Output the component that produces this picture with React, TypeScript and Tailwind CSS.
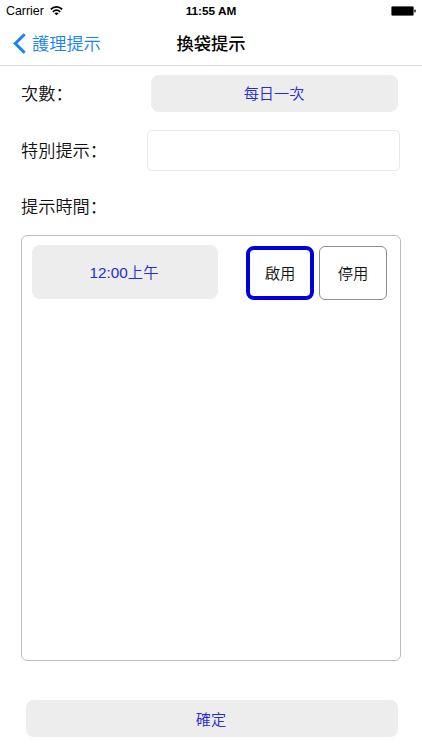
import { ReactNode } from 'react';

const FONT = "font-['Liberation_Sans','Noto_Sans_CJK_TC',sans-serif]";

function StatusBar() {
  return (
    <div className="grid h-[22px] grid-cols-3 items-center pl-[6px] pr-[6px] text-[12px] leading-[22px] text-black">
      <div className="flex items-center gap-[6px]">
        <span className="text-[12.4px]">Carrier</span>
        <svg width="13" height="10" viewBox="0 0 13 10" fill="none" stroke="#000">
          <path d="M0.8 3.4C4 0.1 9 0.1 12.2 3.4" strokeWidth="1.8" />
          <path d="M2.8 5.8C5 3.7 8 3.7 10.2 5.8" strokeWidth="1.7" />
          <path d="M6.5 9.3L4.3 7.2C5.6 6.1 7.4 6.1 8.7 7.2Z" fill="#000" stroke="none" />
        </svg>
      </div>
      <span className="text-center text-[11.8px] font-bold">11:55 AM</span>
      <div className="flex justify-end">
        <svg width="25" height="10" viewBox="0 0 25 10">
          <rect x="0.5" y="0.5" width="22" height="9" rx="1" fill="#000" stroke="#555" strokeWidth="0.6" />
          <rect x="23.2" y="3.6" width="1.6" height="2.8" rx="0.6" fill="#333" />
        </svg>
      </div>
    </div>
  );
}

function NavBar() {
  return (
    <header className="grid h-[44px] grid-cols-[1fr_auto_1fr] items-center border-b border-[#dcdcdc] text-[17.2px]">
      <button className="flex items-center gap-[6px] pl-[13px] text-[#1482fa]">
        <svg width="13" height="21" viewBox="0 0 13 21" fill="none" stroke="currentColor" strokeWidth="3">
          <path d="M11.7 1.2L2.3 10.5L11.7 19.8" />
        </svg>
        <span className="pt-[3px]">護理提示</span>
      </button>
      <h1 className="pt-[3px] font-medium text-black">換袋提示</h1>
      <span />
    </header>
  );
}

function Label({ children }: { children: ReactNode }) {
  return (
    <span className="flex text-[17.2px] leading-6 text-[#111]">
      {children}
      <span className="-mt-px font-['Noto_Sans_CJK_SC',sans-serif]" lang="zh-Hans">：</span>
    </span>
  );
}

export default function App() {
  return (
    <div className={`flex h-[750px] w-[422px] flex-col overflow-hidden bg-white font-[350] ${FONT}`} lang="zh-Hant">
      <StatusBar />
      <NavBar />

      <main className="flex flex-1 flex-col pl-[21px] pr-[21px]">
        <div className="mt-[9px] flex h-[37px] items-center justify-between pr-[3px]">
          <Label>次數</Label>
          <button className="h-[37px] w-[247px] rounded-lg bg-[#ededed] pr-px pt-[2px] text-[15.2px] text-[#2a2ad2]">每日一次</button>
        </div>

        <div className="mt-[18px] flex h-[41px] items-center justify-between pr-px">
          <Label>特別提示</Label>
          <input className="h-[41px] w-[253px] rounded-[5px] border border-[#e9e9e9] px-2 text-[15px] outline-none" />
        </div>

        <div className="mt-[24px] flex h-6">
          <Label>提示時間</Label>
        </div>

        <section className="mt-[16px] h-[426px] w-[380px] shrink-0 rounded-[6px] border border-[#bdbdbd] pl-[10px] pt-[9px]">
          <div className="flex items-start">
            <button className="h-[54px] w-[186px] rounded-lg bg-[#ededed] pr-[2px] pt-[3px] text-[15.3px] text-[#2a2ad2]">12:00上午</button>
            <button className="ml-[28px] mt-px h-[54px] w-[68px] rounded-[8px] border-4 border-[#0000dc] pt-[2px] text-[15.3px] text-[#111]">啟用</button>
            <button className="ml-[5px] mt-px h-[54px] w-[68px] rounded-[6px] border border-[#8c8c8c] pt-[2px] text-[15.3px] text-[#111]">停用</button>
          </div>
        </section>

        <button className="ml-[5px] mt-[39px] h-[37px] w-[372px] shrink-0 rounded-lg bg-[#ededed] pr-[2px] pt-[3px] text-[15.2px] text-[#2a2ad2]">確定</button>
      </main>
    </div>
  );
}
